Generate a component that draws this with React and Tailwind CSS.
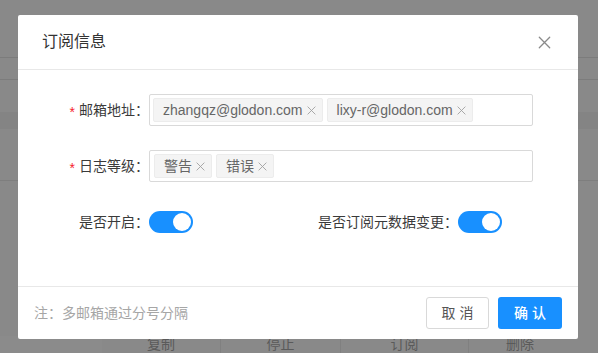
const FONT = { fontFamily: '"Liberation Sans", "Noto Sans CJK SC", sans-serif' };

const XMark = ({ size = 8, color = "#8c8c8c", width = 1.2 }) => (
  <svg width={size} height={size} viewBox="0 0 10 10" fill="none">
    <path d="M1 1L9 9M9 1L1 9" stroke={color} strokeWidth={width} strokeLinecap="round" />
  </svg>
);

const Tag = ({ children }) => (
  <span className="flex items-center h-[24px] pl-[9px] pr-[6px] gap-[4px] bg-[#f4f4f4] border border-[#ececec] rounded-[2px] text-[14px] text-[#666] leading-none">
    {children}
    <XMark size={9} color="#a0a0a0" width={1} />
  </span>
);

const Switch = () => (
  <div className="w-[44px] h-[22px] rounded-full bg-[#1890ff] flex items-center justify-end pr-[2px]">
    <div className="w-[18px] h-[18px] rounded-full bg-white" />
  </div>
);

const Label = ({ required, children, w = "w-[131px]" }) => (
  <div className={`${w} shrink-0 flex justify-end items-center text-[14px] text-[#3a3a3a]`}>
    {required && <span className="text-[#f5222d] mr-[4px] text-[14px] leading-none pt-[3px]">*</span>}
    <span>{children}</span>
  </div>
);

export default function App() {
  return (
    <div className="relative w-[598px] h-[353px] bg-[#898989] overflow-hidden" style={FONT}>
      {/* page behind the mask */}
      <div className="h-[58px] border-b border-[#7c7c7c]" />
      <div className="h-[22px] border-b border-[#7c7c7c]" />
      <div className="h-[32px]" />
      <div className="h-[17px] bg-[#848484]" />
      <div className="h-[52px] border-b border-[#7e7e7e]" />
      <div className="h-[155px]" />
      <div className="flex h-[22px] text-[14px] text-[#5a5a5a] leading-[14px]">
        <div className="w-[102px] bg-[#8b8b8b]" />
        <div className="w-[118px] text-center pt-[1px]">复制</div>
        <div className="w-[120px] text-center pt-[1px] border-l border-[#808080]">停止</div>
        <div className="w-[128px] text-center pt-[1px] border-l border-[#808080]">订阅</div>
        <div className="flex-1 pl-[37px] pt-[1px] border-l border-[#808080]">删除</div>
      </div>

      {/* modal */}
      <div className="absolute left-[18px] top-[15px] w-[560px] h-[324px] bg-white rounded-[2px] flex flex-col">
        <div className="h-[55px] px-[24px] flex items-center justify-between border-b border-[#e8e8e8]">
          <span className="text-[16px] text-[#333]">订阅信息</span>
          <span className="mr-[3px]">
            <XMark size={13} color="#8a8a8a" width={1} />
          </span>
        </div>

        <div className="flex-1 flex flex-col pt-[24px]">
          <div className="flex items-center">
            <Label required>邮箱地址：</Label>
            <div className="w-[384px] h-[32px] border border-[#d9d9d9] rounded-[2px] flex items-center pl-[3px] gap-[4px]">
              <Tag>zhangqz@glodon.com</Tag>
              <Tag>lixy-r@glodon.com</Tag>
            </div>
          </div>

          <div className="flex items-center mt-[24px]">
            <Label required>日志等级：</Label>
            <div className="w-[384px] h-[32px] border border-[#d9d9d9] rounded-[2px] flex items-center pl-[4px] gap-[4px]">
              <Tag>警告</Tag>
              <Tag>错误</Tag>
            </div>
          </div>

          <div className="flex items-center mt-[29px]">
            <div className="w-[280px] flex items-center">
              <Label>是否开启：</Label>
              <Switch />
            </div>
            <div className="flex items-center">
              <Label w="w-[160px]">是否订阅元数据变更：</Label>
              <Switch />
            </div>
          </div>
        </div>

        <div className="h-[53px] border-t border-[#e8e8e8] flex items-center justify-between px-[16px]">
          <span className="text-[14px] text-[#a6a6a6]">注：多邮箱通过分号分隔</span>
          <div className="flex items-center gap-[9px]">
            <button className="w-[63px] h-[32px] border border-[#d9d9d9] rounded-[3px] bg-white text-[14px] text-[#555]">
              取 消
            </button>
            <button className="w-[64px] h-[32px] rounded-[3px] bg-[#1890ff] text-[14px] text-white font-medium">
              确 认
            </button>
          </div>
        </div>
      </div>
    </div>
  );
}
